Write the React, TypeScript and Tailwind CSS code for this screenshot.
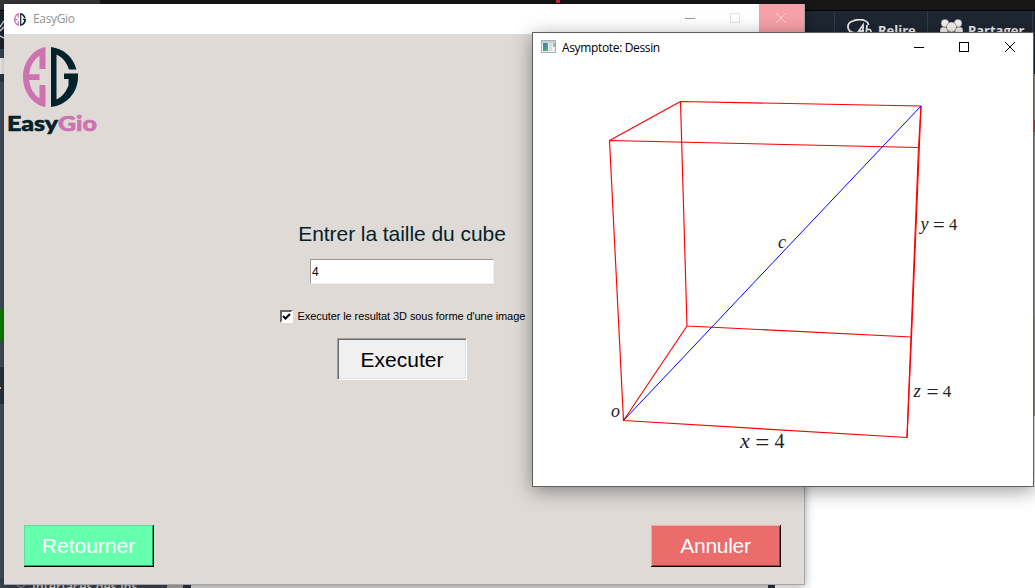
import React from "react";

const arial = "font-['Liberation_Sans',Arial,sans-serif]";
const ui = "font-['Open_Sans','Noto_Sans',sans-serif]";

function Emblem({ className }: { className: string }) {
  return (
    <svg className={className} viewBox="0 0 55 60" fill="none">
      <path d="M22.500 0V22H16.500V9C11 12 7 19 6.300 27.300H16.500V33H6.300C7 41 11 48 16.500 51V38H22.500V60C10 58 0 45 0 30S10 2 22.500 0Z" fill="#cc73b0" />
      <path d="M28 0C41 1.500 50 10 53.500 22.500H46C43.500 15 39.500 10.500 33.500 7.500V52.500C39.500 49.500 43 45 45.500 38.500V32H41V26.500H55V30C55 46 43 58.500 28 60Z" fill="#03222b" />
    </svg>
  );
}

function WindowControls({ muted = false }: { muted?: boolean }) {
  return muted ? (
    <svg className="ml-auto" width="138" height="30" shapeRendering="crispEdges">
      <rect x="93" width="45" height="30" fill="#f6a1a8" />
      <path d="M19 14.500h10" stroke="#999" />
      <rect x="64.500" y="9.500" width="9" height="9" fill="none" stroke="#e1e1e1" />
      <path d="M110 9l10 10m0-10l-10 10" stroke="#fbd0d3" shapeRendering="auto" />
    </svg>
  ) : (
    <svg className="ml-auto" width="138" height="30" shapeRendering="crispEdges">
      <path d="M19 14.500h10" stroke="#000" />
      <rect x="64.500" y="9.500" width="9" height="9" fill="none" stroke="#000" />
      <path d="M110 9l10 10m0-10l-10 10" stroke="#000" shapeRendering="auto" />
    </svg>
  );
}

function Desktop() {
  return (
    <div className="flex h-[588px] flex-col bg-white">
      <div className="flex h-[10px] shrink-0 justify-between bg-[#171717]">
        <div className="h-full w-[100px] bg-[#353535]" />
        <div className="mr-[475px] h-[3px] w-[4px] bg-[#c42a43]" />
      </div>
      <div className={`flex h-[64px] shrink-0 justify-end border-t border-black bg-[#1e2632] text-[13px] font-bold text-[#eee] ${ui}`}>
        <div className="mr-auto flex w-[4px] flex-col">
          <svg className="mt-[9px] shrink-0" width="4" height="19" fill="none" stroke="#ddd" strokeWidth="1.500">
            <path d="M4 1L0 7m4 0L0 11m0 5l4 2" />
          </svg>
          <div className="mt-[10px] h-[9px] bg-[#3c4654]" />
          <div className="h-[16px] shrink-0 bg-[#f5f3f0]" />
        </div>
        <div className="flex w-[93px] gap-[5px] border-l border-[#303b4c] pl-[12px] pt-[8px]">
          <svg className="shrink-0" width="26" height="24" viewBox="0 0 26 24" fill="none" stroke="#eee" strokeWidth="1.800">
            <path d="M8 14C-1 13-1 4 6 2c7-3 15-1 15.500 4" />
            <path d="M9 16l7-10v10m-4-4h5m3-6l-1 10m0-5q5-2 5 2t-5 3" strokeWidth="1.800" />
          </svg>
          <span className="pt-[2px]">Relire</span>
        </div>
        <div className="flex w-[106px] gap-[5px] border-x border-[#303b4c] pl-[12px] pt-[8px]">
          <svg className="shrink-0" width="23" height="24" fill="#f5f2ee" stroke="#1e2632" strokeWidth="0.400">
            <rect y="8" width="8" height="8" rx="3" /><rect x="15" y="8" width="8" height="8" rx="3" />
            <circle cx="5" cy="4.300" r="4" /><circle cx="18" cy="4.300" r="4" />
            <rect x="6" y="12" width="11" height="10" rx="4" /><circle cx="11.500" cy="8" r="5" />
          </svg>
          <span className="pt-[2px]">Partager</span>
        </div>
        <div className="w-[2px]" />
      </div>
      <div className="flex min-h-0 flex-1 justify-between">
        <div className="flex w-[183px] flex-col bg-[#434d5e]">
          <div className="h-[8px] shrink-0 bg-[#2d3744]" />
          <div className="h-[227px] shrink-0" />
          <div className="h-[32px] shrink-0 bg-[#108000]" />
          <div className="h-[25px] shrink-0" />
          <div className="h-[38px] shrink-0 border-t border-[#4a5159] bg-[#29323c] pt-[20px]">
            <div className="h-[2px] w-px bg-[#ffb676]" />
          </div>
          <div className="mt-auto flex h-[10px] shrink-0 items-start overflow-hidden bg-[#3b4454]">
            <svg className="ml-[15px] mt-[6px] shrink-0" width="12" height="10" fill="none" stroke="#aaa"><path d="M1 0l5 4 5-4" /></svg>
            <span className={`ml-[5px] whitespace-nowrap text-[12.500px] font-semibold leading-[17px] text-[#ddd] ${ui}`}>Interfaces des ins</span>
            <div className="ml-auto h-full w-[16px] shrink-0 bg-[#aaa]" />
          </div>
        </div>
        <div className="mt-auto flex h-[10px] flex-1 bg-[#ddd]">
          <div className="w-[8px] bg-[#2b3440]" />
          <div className="ml-[577px] w-[7px] bg-[#2b3440]" />
          <div className="flex-1 bg-white" />
        </div>
        <div className="flex w-px flex-col bg-[#9f988f]">
          <div className="mt-[46px] h-[12px] bg-[#b34646]" />
          <div className="mt-[4px] h-[180px] bg-[#aaa]" />
          <div className="mt-[100px] flex-1 bg-white" />
        </div>
      </div>
    </div>
  );
}

function EasyGioWindow() {
  return (
    <section className="absolute left-[4px] top-[4px] flex h-[581px] w-[801px] flex-col border-b border-r border-[#a5a5a5] bg-[#dfdad6] shadow-[0_1px_9px_rgba(0,0,0,0.35)]">
      <header className="flex h-[30px] shrink-0 items-center bg-white pl-[9px]">
        <Emblem className="h-[13px] w-[14px]" />
        <span className={`ml-[6px] text-[12px] tracking-[-0.350px] text-[#929292] ${ui}`}>EasyGio</span>
        <WindowControls muted />
      </header>
      <main className="flex min-h-0 flex-1 flex-col">
        <div className="flex h-[110px] flex-col pl-[4px] pt-[13px]">
          <Emblem className="ml-[15px] h-[60px] w-[55px]" />
          <svg className="mt-[3px] h-[32px] w-[110px] shrink-0">
            <g className="font-['Lato','Open_Sans',sans-serif] text-[20.500px] font-black" strokeWidth="0.600">
              <text x="-1" y="21" textLength="51" lengthAdjust="spacingAndGlyphs" fill="#03222b" stroke="#03222b">Easy</text>
              <text x="50" y="21" textLength="39" lengthAdjust="spacingAndGlyphs" fill="#cc73b0" stroke="#cc73b0">Gio</text>
            </g>
          </svg>
        </div>
        <form className={`flex w-[796px] flex-col items-center text-black ${arial}`} onSubmit={(e) => e.preventDefault()}>
          <label htmlFor="size" className="mt-[74px] h-[32px] text-[21px] leading-[32px] tracking-[-0.060px] text-[#03222b]">Entrer la taille du cube</label>
          <input id="size" defaultValue="4" className="mt-[9px] h-[25px] w-[184px] border border-b-[#f1f1f1] border-l-[#999] border-r-[#f1f1f1] border-t-[#999] bg-white pl-px text-[12px] outline-none" />
          <label className="mt-[26px] flex h-[13px] w-[245px] items-center whitespace-nowrap text-[11px] tracking-[-0.080px]">
            <span className="flex size-[13px] shrink-0 items-center justify-center border-2 border-b-white border-l-[#666] border-r-white border-t-[#666] bg-white">
              <svg width="9" height="9" fill="none" stroke="#000" strokeWidth="2"><path d="M1 4l2.500 2.500L8 2" /></svg>
            </span>
            <span className="ml-[5px]">Executer le resultat 3D sous forme d'une image</span>
          </label>
          <button className="mt-[15px] h-[42px] w-[130px] border border-b-white border-l-[#a0a0a0] border-r-white border-t-[#a0a0a0] bg-[#f0f0f0] pt-px text-[21px] shadow-[inset_1px_1px_#696969,inset_-1px_-1px_#e3e3e3]">Executer</button>
        </form>
        <footer className={`mb-[17px] ml-[20px] mr-[23px] mt-auto flex justify-between text-[21px] text-white ${arial}`}>
          <button className="h-[42px] w-[130px] border-b border-r border-black bg-[#66ffad] shadow-[inset_1px_1px_#60dc9a,inset_-1px_-1px_#2e9e63]">Retourner</button>
          <button className="h-[42px] w-[130px] border-b border-r border-black bg-[#ec6b6b] tracking-[-0.300px] shadow-[inset_1px_1px_#f5a7a7,inset_-1px_-1px_#9b4141]">Annuler</button>
        </footer>
      </main>
    </section>
  );
}

function MathLabel({ x, y, variable, size }: { x: number; y: number; variable: string; size: number }) {
  return (
    <text y={y} fontSize={size} className="font-['Liberation_Serif',serif]" fill="#222">
      <tspan x={x} fontStyle="italic" fontSize={size * 1.1}>{variable}</tspan>
      <tspan x={x + size * 0.76} dy={size * 0.13} fontSize={size * 1.25}>=</tspan>
      <tspan x={x + size * 1.72} dy={-size * 0.13}>4</tspan>
    </text>
  );
}

function AsymptoteWindow() {
  return (
    <section className="absolute left-[532px] top-[32px] flex h-[455px] w-[502px] flex-col border border-[#60605e] bg-white shadow-[0_4px_18px_rgba(0,0,0,0.4)]">
      <header className="flex h-[30px] shrink-0 items-center pl-[8px]">
        <svg className="-mt-[2px]" width="15" height="14">
          <defs><linearGradient id="pane" x2="1" y2="1"><stop stopColor="#4779ad" /><stop offset="1" stopColor="#51b577" /></linearGradient></defs>
          <rect x="0.500" y="0.500" width="14" height="12" fill="#f1f1f1" stroke="#a9b0b2" />
          <rect x="1" y="1" width="13" height="2" fill="#cbd2d6" />
          <rect x="2" y="3" width="5" height="8" fill="url(#pane)" />
          <rect x="8" y="3" width="3" height="8" fill="#ddd" /><rect x="12" y="3" width="2" height="4" fill="#8cc29e" />
        </svg>
        <span className={`ml-[6px] whitespace-nowrap text-[12px] tracking-[-0.350px] text-black ${ui}`}>Asymptote: Dessin</span>
        <WindowControls />
      </header>
      <svg className="shrink-0" width="500" height="423" viewBox="533 63 500 423" fill="none">
        <g stroke="#f00" strokeWidth="1.150" strokeLinejoin="round">
          <path d="M623.500 420.500L907 437.500L918.500 147.500L609.500 140.500Z" />
          <path d="M687 326L911.500 337L921 106L680.500 101.500Z" />
          <path d="M623.500 420.500L687 326M907 437.500L911.500 337M918.500 147.500L921 106M609.500 140.500L680.500 101.500" />
        </g>
        <path d="M623.500 420.500L921 106" stroke="#00f" strokeWidth="1" />
        <MathLabel x={740} y={448} variable="x" size={20} />
        <MathLabel x={920.500} y={229.500} variable="y" size={16.500} />
        <MathLabel x={913.500} y={397} variable="z" size={17} />
        <g className="font-['Liberation_Serif',serif] italic" fill="#222" fontSize="18">
          <text x="611" y="417">o</text><text x="778" y="248">c</text>
        </g>
      </svg>
    </section>
  );
}

export default function App() {
  return (
    <div className="relative h-[588px] w-[1035px] overflow-hidden">
      <Desktop />
      <EasyGioWindow />
      <AsymptoteWindow />
    </div>
  );
}
